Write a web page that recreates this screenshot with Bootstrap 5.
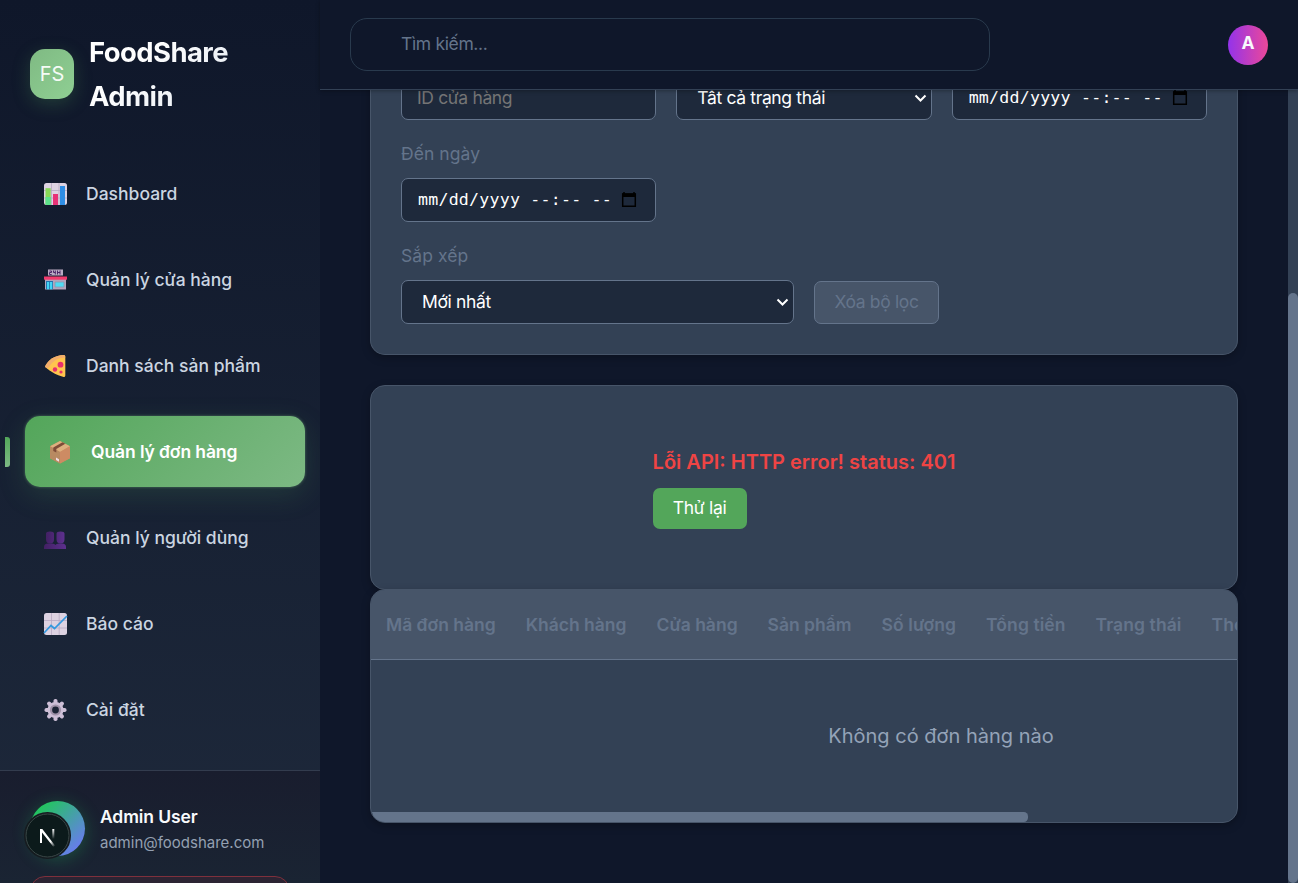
<!DOCTYPE html>
<html lang="vi">
<head>
<meta charset="utf-8">
<meta name="viewport" content="width=device-width, initial-scale=1">
<title>FoodShare Admin</title>
<link href="https://cdn.jsdelivr.net/npm/bootstrap@5.3.0/dist/css/bootstrap.min.css" rel="stylesheet">
<style>
  body { font-family: Inter, "Liberation Sans", sans-serif; background: #0f172a; color: #f8fafc; font-size: 17.5px; }
  .side { width: 320px; background: linear-gradient(180deg, #0f172a 0%, #1e293b 100%); }
  .brand { height: 158px; padding: 30px 30px 40px; gap: 15px; }
  .brand-mark { width: 44px; height: 50px; border-radius: 15px; margin-top: 19px; font-size: 20px; line-height: 50px; background: linear-gradient(135deg, #7fba83, #8fcf93); box-shadow: 0 5px 18px rgba(82,168,92,.25); color: #f5fbf6; }
  .brand-name { font-size: 27.5px; line-height: 44px; font-weight: 700; letter-spacing: -.6px; background: linear-gradient(135deg, #fff 30%, #e2e8f0); -webkit-background-clip: text; background-clip: text; color: transparent; }
  .menu { gap: 15px; padding: 0 20px; }
  .menu-item { height: 71px; padding: 2px 0 0 23px; gap: 18px; border-radius: 15px; color: #cbd5e1; font-weight: 500; text-decoration: none; letter-spacing: .01px; }
  .menu-item svg { width: 25px; height: 25px; flex: none; }
  .menu-item.current { margin: 0 -5px 0 5px; color: #fff; font-weight: 600; letter-spacing: -.1px; background: linear-gradient(135deg, #53a65a, #7db984); box-shadow: 0 8px 28px rgba(82,168,92,.18), 0 0 3px rgba(125,185,132,.5); }
  .marker { width: 5px; height: 30px; left: -20px; top: 21px; border-radius: 0 3px 3px 0; background: linear-gradient(180deg, #53a65a, #7db984); }
  .account { height: 113px; border-top: 1px solid #333c4e; padding: 30px 30px 0; background: linear-gradient(180deg, #191d2e, #1a2433); }
  .avatar { width: 55px; height: 55px; background: linear-gradient(135deg, #22c55e 15%, #667eea 85%); box-shadow: 0 3px 18px rgba(34,197,94,.3); }
  .dev-badge { width: 47px; height: 47px; left: -6px; top: 11px; }
  .who { padding: 2px 0 0 15px; }
  .who-name { font-weight: 600; line-height: 27px; letter-spacing: -.1px; }
  .who-mail { font-size: 15px; line-height: 25px; color: #94a0b1; }
  .logout { height: 50px; margin-top: 20px; border: 1px solid #7f303c; border-radius: 15px; background: #2c2433; }
  .topbar { height: 90px; border-bottom: 1px solid #334155; padding: 0 30px; background: #0f172a; box-shadow: 0 1px 4px rgba(0,0,0,.3); z-index: 2; }
  .search { width: 640px; height: 53px; border: 1px solid #293a4d; border-radius: 17px; padding-left: 50px; color: #64748b; margin-top: -1px; }
  .search, .field, .act { letter-spacing: -.35px; }
  .user-dot { width: 40px; height: 40px; padding-bottom: 2px; font-weight: 700; font-size: 17.5px; background: linear-gradient(90deg, #9333ea, #ec4899); }
  .content-area { width: 968px; padding: 0 50px; }
  .panel { background: #334155; border: 1px solid #475569; border-radius: 15px; box-shadow: 0 3px 8px rgba(0,0,0,.25); }
  .filters { margin-top: -14px; height: 279px; border-top: 0; border-radius: 0 0 15px 15px; padding: 0 30px; }
  .grid3 { display: grid; grid-template-columns: repeat(3, 1fr); gap: 20px; }
  .field { height: 44px; background: #1e293b; border: 1px solid #64748b; border-radius: 7px; padding: 0 15px; color: #fff; }
  .field.pick { padding: 0 4px 0 20px; }
  .field.date { font-family: "DejaVu Sans Mono", "Liberation Mono", monospace; letter-spacing: .22px; font-size: 16.6px; white-space: pre; padding: 0 18px 0 16px; }
  .hint { color: #757575; }
  .flabel { line-height: 28px; margin: 20px 0 10px; color: #64748b; letter-spacing: .07px; }
  .sort { width: 393px; }
  .act { height: 43px; border-radius: 7px; font-size: 17.5px; border: 1px solid #64748b; }
  .act.clear { width: 125px; margin: 1px 0 0 20px; background: #475569; color: #64748b; }
  .act.retry { width: 94px; height: 41px; border: 0; background: #53a65a; color: #fff; letter-spacing: -.25px; }
  .failure { height: 205px; margin-top: 30px; padding-top: 60px; }
  .fail-text { color: #ef4444; font-size: 20px; line-height: 32px; font-weight: 600; margin-bottom: 10px; }
  .orders { height: 234px; margin-top: -1px; }
  .orders-head { height: 70px; padding-top: 2px; background: #475569; border-bottom: 1px solid #64748b; color: #64748b; font-weight: 600; width: 1140px; }
  .orders-head span { padding: 0 15px; }
  .orders-head span:nth-child(n+5) { letter-spacing: .09px; }
  .empty { height: 152px; width: 1140px; font-size: 20px; color: #94a3b8; }
  .hbar { width: 656px; height: 10px; border-radius: 0 5px 5px 12px; background: #64748b; margin-left: 1px; }
  .vtrack { width: 10px; background: #334155; padding-top: 203px; }
  .vthumb { background: #64748b; border-radius: 5px; height: 590px; }
</style>
</head>
<body class="vh-100 overflow-hidden d-flex">
<aside class="side d-flex flex-column flex-shrink-0 vh-100 overflow-hidden">
  <div class="brand d-flex">
    <div class="brand-mark text-center flex-shrink-0">FS</div>
    <div class="brand-name">FoodShare<br>Admin</div>
  </div>
  <nav class="menu d-flex flex-column flex-grow-1">
    <a class="menu-item d-flex align-items-center" href="#">
      <svg viewBox="0 0 25 25"><rect x="1" y="1" width="23" height="22" rx="2.5" fill="#ded3e2"/><path d="M8.500 1v22M16 1v22M1 8.500h23M1 16h23" stroke="#b8a9c2" stroke-width=".8"/><path d="M2.500 6.200h5.200V23H2.500z" fill="#88d956"/><path d="M2.500 15h5.200v8H2.500z" fill="#5be08a"/><path d="M10 12h5v11h-5z" fill="#e83276"/><path d="M17 4h5v19h-5z" fill="#2f8de4"/></svg>
      <span>Dashboard</span></a>
    <a class="menu-item d-flex align-items-center" href="#">
      <svg viewBox="0 0 25 25"><rect x="5" y="1.500" width="15" height="6" fill="#b9aac2"/><path d="M6.500 3h2v1.500h-2v2h2.200M10.500 2.500v2h1.800M12.300 2.500v4M14.500 2.500v4M14.500 4.500h2.500M17 2.500v4" fill="none" stroke="#4b2768" stroke-width="1"/><path d="M2 11h21v10.500H2z" fill="#b3a4bd"/><path d="M1 8.500h23v3.200H1z" fill="#f23a6d"/><path d="M3 13h7v8.300H3z" fill="#2272ad"/><path d="M4 14h2.200v7.300H4zM7 14h2.200v7.300H7z" fill="#42d5f5"/><path d="M12 14h9v5h-9z" fill="#4edbf4" stroke="#899ab0" stroke-width=".8"/></svg>
      <span>Quản lý cửa hàng</span></a>
    <a class="menu-item d-flex align-items-center" href="#">
      <svg viewBox="0 0 25 25"><path d="M2 12.500C5 6 12 1 21 1q1.300 0 1.300 1.500v19q0 1.700-1.700 1.500C15 21.500 7 18 2 12.500z" fill="#ffc44e"/><path d="M2 12.500C5 6 12 1 21 1q1.300 0 1.300 2.600C14.500 3.700 9.500 7.500 6.500 12.500 5 14.500 3 14.500 2 12.500z" fill="#f3ad6c"/><circle cx="17.500" cy="10.700" r="2.900" fill="#e82f6c"/><circle cx="12" cy="15.500" r="2.200" fill="#e82f6c"/><circle cx="18" cy="18" r="1.600" fill="#e82f6c"/></svg>
      <span>Danh sách sản phẩm</span></a>
    <a class="menu-item current position-relative d-flex align-items-center" href="#">
      <i class="marker position-absolute"></i>
      <svg viewBox="0 0 25 25"><path d="M12 1l10 5.200v12L12 23.500 2 18.200v-12z" fill="#c88d5c"/><path d="M12 1l10 5.200L12 12 2 6.200z" fill="#deb07f"/><path d="M12 12v11.500L2 18.200v-12z" fill="#b88a62"/><path d="M12 12l10-5.800v12l-10 5.300z" fill="#cd8b63"/><path d="M14.500 2.300l2.800 1.500-9 5.300v3.500l-3-1.700V7.500z" fill="#7e4c38"/><path d="M8 17.500l3 1.700v2.500L8 20z" fill="#f2dce2"/></svg>
      <span>Quản lý đơn hàng</span></a>
    <a class="menu-item d-flex align-items-center" href="#">
      <svg viewBox="0 0 25 25"><defs><linearGradient id="pp" x2="1" y2="0"><stop stop-color="#422064"/><stop offset="1" stop-color="#5d308e"/></linearGradient></defs><g fill="url(#pp)"><path d="M3 7.500q0-2 4-2t4 2v5.700q0 4.300-4 4.300t-4-4.300zM13.500 7.500q0-2 4-2t4 2v5.700q0 4.300-4 4.300t-4-4.300z"/><path d="M1 23v-2q0-3.500 4-3.500h4q2.500 0 3.500 1.500 .5-1.500 3.500-1.500h3q4 0 4 3.500v2z"/></g></svg>
      <span>Quản lý người dùng</span></a>
    <a class="menu-item d-flex align-items-center" href="#">
      <svg viewBox="0 0 25 25"><rect x="1" y="1" width="23" height="22" rx="2.500" fill="#ddd2e1"/><path d="M8.500 1v22M16.200 1v22M1 8.500h23M1 16h23" stroke="#b9aac3" stroke-width=".8"/><path d="M1 21l7-7.500 3.500 3L24 4" fill="none" stroke="#3298df" stroke-width="1.700"/></svg>
      <span>Báo cáo</span></a>
    <a class="menu-item d-flex align-items-center" href="#">
      <svg viewBox="0 0 25 25"><g transform="translate(12.500 12)" fill="#cdbfd6"><circle r="8"/><g id="tooth"><rect x="-2" y="-11" width="4" height="22" rx="1.800"/><rect x="-11" y="-2" width="22" height="4" rx="1.800"/></g><use href="#tooth" transform="rotate(45)"/><circle r="5.600" fill="#a093a9"/><circle r="3.400" fill="#1b2435"/></g></svg>
      <span>Cài đặt</span></a>
  </nav>
  <div class="account flex-shrink-0">
    <div class="d-flex">
      <div class="avatar rounded-circle position-relative flex-shrink-0">
        <svg class="dev-badge position-absolute" viewBox="0 0 47 47"><defs><linearGradient id="na" x1="0" y1="0" x2="1" y2="1"><stop offset=".7" stop-color="#fff"/><stop offset="1" stop-color="#fff" stop-opacity="0"/></linearGradient><linearGradient id="nb" x2="0" y2="1"><stop stop-color="#fff"/><stop offset="1" stop-color="#fff" stop-opacity="0"/></linearGradient></defs><circle cx="23.500" cy="23.500" r="22.800" fill="#0c1a1b" stroke="#171b20" stroke-width="1.400"/><circle cx="23.500" cy="23.500" r="21.500" fill="none" stroke="#3b4747"/><path d="M16 31V17h2.300l12.700 16.500-1.700 1.200L18 20.500V31z" fill="url(#na)"/><path d="M28.300 17h2v10h-2z" fill="url(#nb)"/></svg>
      </div>
      <div class="who"><div class="who-name">Admin User</div><div class="who-mail">admin@foodshare.com</div></div>
    </div>
    <div class="logout"></div>
  </div>
</aside>
<div class="d-flex flex-column flex-grow-1 vh-100">
  <header class="topbar d-flex align-items-center justify-content-between flex-shrink-0">
    <div class="search d-flex align-items-center">Tìm kiếm...</div>
    <div class="user-dot rounded-circle d-flex align-items-center justify-content-center">A</div>
  </header>
  <div class="d-flex flex-grow-1 overflow-hidden">
    <main class="content-area">
      <section class="panel filters">
        <div class="grid3">
          <div class="field d-flex align-items-center hint">ID cửa hàng</div>
          <div class="field pick d-flex align-items-center justify-content-between"><span>Tất cả trạng thái</span><svg width="13" height="9" viewBox="0 0 13 9"><path d="M1.500 1.500l5 5 5-5" fill="none" stroke="#fff" stroke-width="2"/></svg></div>
          <div class="field date d-flex align-items-center justify-content-between"><span>mm/dd/yyyy --:-- --</span><svg width="16" height="17" viewBox="0 0 16 17"><path d="M3 0v3M13 0v3" stroke="#000" stroke-width="1.500"/><path d="M1.700 2h12.600v12.300H1.700z" fill="none" stroke="#000" stroke-width="1.500"/><path d="M1 1.500h14V5H1z"/></svg></div>
        </div>
        <div class="flabel">Đến ngày</div>
        <div class="grid3">
          <div class="field date d-flex align-items-center justify-content-between"><span>mm/dd/yyyy --:-- --</span><svg width="16" height="17" viewBox="0 0 16 17"><path d="M3 0v3M13 0v3" stroke="#000" stroke-width="1.500"/><path d="M1.700 2h12.600v12.300H1.700z" fill="none" stroke="#000" stroke-width="1.500"/><path d="M1 1.500h14V5H1z"/></svg></div>
        </div>
        <div class="flabel">Sắp xếp</div>
        <div class="d-flex">
          <div class="field pick sort d-flex align-items-center justify-content-between"><span>Mới nhất</span><svg width="13" height="9" viewBox="0 0 13 9"><path d="M1.500 1.500l5 5 5-5" fill="none" stroke="#fff" stroke-width="2"/></svg></div>
          <button class="btn act clear p-0">Xóa bộ lọc</button>
        </div>
      </section>
      <section class="panel failure d-flex justify-content-center">
        <div><div class="fail-text">Lỗi API: HTTP error! status: 401</div><button class="btn act retry p-0">Thử lại</button></div>
      </section>
      <section class="panel orders overflow-hidden">
        <div class="orders-head d-flex align-items-center text-nowrap"><span>Mã đơn hàng</span><span>Khách hàng</span><span>Cửa hàng</span><span>Sản phẩm</span><span>Số lượng</span><span>Tổng tiền</span><span>Trạng thái</span><span>Thời gian</span></div>
        <div class="empty d-flex align-items-center justify-content-center">Không có đơn hàng nào</div>
        <div class="hbar"></div>
      </section>
    </main>
    <div class="vtrack flex-shrink-0"><div class="vthumb"></div></div>
  </div>
</div>
<script src="https://cdn.jsdelivr.net/npm/bootstrap@5.3.0/dist/js/bootstrap.bundle.min.js"></script>
</body>
</html>
